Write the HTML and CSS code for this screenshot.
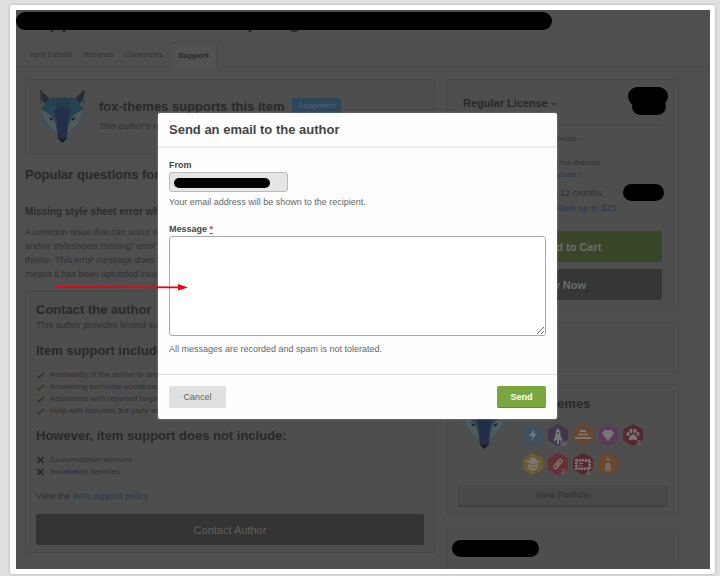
FILE: index.html
```html
<!DOCTYPE html>
<html lang="en">
<head>
<meta charset="utf-8">
<title>Send an email to the author</title>
<link rel="stylesheet" href="styles.css">
</head>
<body>
<svg class="defs" aria-hidden="true">
  <symbol id="fox" viewBox="0 0 156 162">
    <path fill="#2a2d35" d="M12 1 40 28 24 50 14 44ZM146 1 118 28 134 50 144 44Z"/>
    <path fill="#465459" d="M12 1 17 34 27 44 18 60ZM146 1 141 34 131 44 140 60Z"/>
    <path fill="#405258" d="M2 80 20 64 62 92 68 142Z"/>
    <path fill="#405258" d="M156 80 138 64 96 92 90 142Z"/>
    <path fill="#505a5d" d="M20 62 60 86 67 136C44 118 20 92 20 62ZM138 62 98 86 91 136C114 118 138 92 138 62Z"/>
    <path fill="#264350" d="M43 26H115L142 58 128 70C104 82 98 96 93 146L79 160 65 146C60 96 54 82 30 70L16 58Z"/>
    <path fill="#223c4e" d="M62 26H96L104 66 79 96 54 66Z"/>
    <path fill="#242e48" d="M54 66 79 54 104 66C94 88 94 110 92 146L79 156 66 146C64 110 64 88 54 66Z"/>
    <path fill="#1b1d22" d="M64 144 79 151 94 144 88 154 79 162 70 154ZM40 84 51 90 49 95 41 90ZM118 84 107 90 109 95 117 90Z"/>
  </symbol>
  <symbol id="hex" viewBox="0 0 20 22"><path d="M9 .4Q10 0 11 .4L19 5Q20 5.600 20 6.500V15.500Q20 16.400 19 17L11 21.600Q10 22 9 21.600L1 17Q0 16.400 0 15.500V6.500Q0 5.600 1 5Z"/></symbol>
  <symbol id="tick" viewBox="0 0 9 8"><path d="M1 4.500 3.200 6.600 8 1.500" fill="none" stroke="#2d4319" stroke-width="1.800"/></symbol>
  <symbol id="cross" viewBox="0 0 9 8"><path d="M1.500 1 7.500 7M7.500 1 1.500 7" fill="none" stroke="#262626" stroke-width="1.600"/></symbol>
</svg>

<div class="frame">
  <div class="screen">
    <header class="top">
      <h1 class="title"><span>pp</span> <span class="title-p">p</span> <span class="title-g">g</span></h1>
      <nav class="tabs">
        <a href="#">Item Details</a>
        <a href="#">Reviews</a>
        <a href="#">Comments</a>
        <a href="#" class="active">Support</a>
      </nav>
    </header>

    <div class="columns">
      <main class="main">
        <section class="card supported">
          <svg class="fox"><use href="#fox"/></svg>
          <div>
            <h2>fox-themes supports this item <span class="badge">Supported</span></h2>
            <p>This author's res</p>
          </div>
        </section>
        <h2 class="popular">Popular questions for</h2>
        <h3>Missing style sheet error wh</h3>
        <p class="answer">A common issue that can occur w<br>and/or stylesheets missing” error<br>theme. This error message does<br>means it has been uploaded inco</p>

        <section class="card contact">
          <h2>Contact the author</h2>
          <p>This author provides limited su</p>
          <h2 class="list-title">Item support include</h2>
          <ul>
            <li><svg><use href="#tick"/></svg>Availability of the author to ans</li>
            <li><svg><use href="#tick"/></svg>Answering technical questions</li>
            <li><svg><use href="#tick"/></svg>Assistance with reported bugs</li>
            <li><svg><use href="#tick"/></svg>Help with included 3rd party as</li>
          </ul>
          <h2 class="list-title">However, item support does not include:</h2>
          <ul>
            <li><svg><use href="#cross"/></svg>Customization services</li>
            <li><svg><use href="#cross"/></svg>Installation services</li>
          </ul>
          <p class="policy">View the <a href="#">item support policy</a></p>
          <button type="button" class="big">Contact Author</button>
        </section>
      </main>

      <aside class="side">
        <section class="card license">
          <h3>Regular License <i class="caret"></i></h3>
          <ul>
            <li>Quality checked by Envato</li>
            <li>Future updates</li>
            <li>6 month support from fox-themes</li>
            <li><a href="#">What does support include?</a></li>
          </ul>
          <p>Extend support to 12 months<br><a href="#">Get this now and save up to $23</a></p>
          <button type="button" class="big cart"><svg viewBox="0 0 14 12"><path d="M0 1H3L5 8H12L13.500 3H4" fill="none" stroke="#6d6d6d" stroke-width="1.500"/><circle cx="6" cy="10.500" r="1.200" fill="#6d6d6d"/><circle cx="11" cy="10.500" r="1.200" fill="#6d6d6d"/></svg>Add to Cart</button>
          <button type="button" class="big buy">Buy Now</button>
        </section>
        <section class="card blank"></section>
        <section class="card author">
          <div class="author-row">
            <svg class="fox"><use href="#fox"/></svg>
            <div>
              <h2>fox-themes</h2>
              <div class="badges">
                <svg viewBox="0 0 20 22"><use href="#hex" fill="#3d5261"/><path fill="#777" d="M11.500 5 6 12H9.500L8 17 14 9.500H10.500Z"/></svg>
                <svg viewBox="0 0 20 22"><use href="#hex" fill="#42364f"/><path fill="#777" d="M10 4Q13 7 12.500 12L14 14V18L12 16H11V20H9V16H8L6 18V14L7.500 12Q7 7 10 4Z"/><circle cx="10" cy="9" r="1" fill="#42364f"/><text x="12" y="22">W</text></svg>
                <svg viewBox="0 0 20 22"><use href="#hex" fill="#67462f"/><path fill="#777" d="M7 6H13V8H7ZM5 9.500H15V11.500H5ZM2 13H18V15H2Z"/></svg>
                <svg viewBox="0 0 20 22"><use href="#hex" fill="#5d3a5d"/><path fill="#777" d="M6.500 6H13.500L16 9.500 10 17 4 9.500Z"/></svg>
                <svg viewBox="0 0 20 22"><use href="#hex" fill="#55292f"/><g fill="#777"><ellipse cx="5" cy="10" rx="1.500" ry="2"/><ellipse cx="8" cy="7" rx="1.600" ry="2.200"/><ellipse cx="12" cy="7" rx="1.600" ry="2.200"/><ellipse cx="15" cy="10" rx="1.500" ry="2"/><path d="M10 10Q13 11 14.500 15Q14 17 10 15.500Q6 17 5.500 15Q7 11 10 10Z"/></g><text x="14" y="21">8</text></svg>
                <svg viewBox="0 0 20 22"><use href="#hex" fill="#6b5c2e"/><path fill="#777" d="M2 7Q6 9 6.500 7 7 3.500 10 4.500 13 3.500 13.500 7 14 9 18 7 16 11 10 11 4 11 2 7ZM4.500 11Q10 13 15.500 11L14 16 10 18 6 16Z"/><path d="M7 14Q10 16 13 14" stroke="#6b5c2e" fill="none"/></svg>
                <svg viewBox="0 0 20 22"><use href="#hex" fill="#682f33"/><g fill="none" stroke="#777" stroke-width="1.500"><path d="M9 9 11 7Q13 5.500 14 7.500 14.500 9 13 10L11 12Q9.500 13 8.500 11.500"/><path d="M11 12 9 15Q7 16.500 6 14.500 5.500 13 7 12L9 10Q10.500 9 11.500 10.500"/></g><text x="13" y="21">2</text></svg>
                <svg viewBox="0 0 20 22"><use href="#hex" fill="#55292f"/><path d="M3 7H17V16H3Z" fill="none" stroke="#777" stroke-width="2.200" stroke-dasharray="2 1"/><path d="M4 8H16V15H4Z" fill="none" stroke="#777"/><path d="M6 10.500H10M6 12.500H9" stroke="#777"/><text x="13" y="22">4</text></svg>
                <svg viewBox="0 0 20 22"><use href="#hex" fill="#6a472e"/><path d="M10 4 12 7.500H8Z" fill="#777"/><text class="eight" x="7" y="18">8</text></svg>
              </div>
            </div>
          </div>
          <button type="button" class="portfolio">View Portfolio</button>
        </section>
        <section class="card last"></section>
      </aside>
    </div>

    <i class="ink ink-title"></i>
    <i class="ink ink-price"></i>
    <i class="ink ink-price-low"></i>
    <i class="ink ink-extend"></i>
    <i class="ink ink-last"></i>

    <form class="modal" role="dialog" aria-labelledby="modal-title">
      <h2 id="modal-title">Send an email to the author</h2>
      <div class="modal-body">
        <label for="from">From</label>
        <div class="from">
          <input id="from" type="email" disabled>
          <i class="ink ink-from"></i>
        </div>
        <p>Your email address will be shown to the recipient.</p>
        <label for="message" class="message-label">Message <abbr title="required">*</abbr></label>
        <textarea id="message"></textarea>
        <p>All messages are recorded and spam is not tolerated.</p>
      </div>
      <footer>
        <button type="button" class="cancel">Cancel</button>
        <button type="submit" class="send">Send</button>
      </footer>
    </form>

    <svg class="arrow" viewBox="0 0 134 8" aria-hidden="true"><path d="M0 3 124 3.500V5.200L0 4.800Z" fill="#f00010"/><path d="M123 1 133 4.500 123 7.500Z" fill="#f00010"/></svg>
  </div>
</div>
</body>
</html>
```

FILE: styles.css
```css
* { box-sizing: border-box; }

body {
  margin: 0;
  padding: 5px 5px 2px 10px;
  min-height: 100vh;
  display: flex;
  background: repeating-conic-gradient(#e2e2e2 0 25%, #dedede 0 50%) 0 0 / 4px 4px;
  font-family: "Liberation Sans", Arial, sans-serif;
  font-size: 9px;
  line-height: 14px;
  color: #303030;
}

h1, h2, h3, p, ul { margin: 0; padding: 0; }
ul { list-style: none; }
a { color: #2b3a48; text-decoration: none; }
button, input, textarea { font: inherit; margin: 0; }
h2 { font-size: 13px; line-height: 16px; color: #292929; }
.defs { position: absolute; width: 0; height: 0; }

.frame {
  flex: 1;
  padding: 5px 5px 5px 6px;
  background: #fff;
  border-radius: 2px;
  box-shadow: 0 0 3px #aaa;
  display: flex;
}

.screen {
  position: relative;
  flex: 1;
  min-width: 0;
  overflow: hidden;
  background: #4f4f4f;
  display: flex;
  flex-direction: column;
}

/* Header and tabs */
.top { border-bottom: 1px solid #494949; }
.title {
  height: 33px;
  padding: 1px 0 0 33px;
  font-size: 20px;
  line-height: 20px;
  color: #292929;
}
.title-p { margin-left: 168px; }
.title-g { margin-left: 24px; }
.tabs {
  display: flex;
  align-items: flex-end;
  gap: 11px;
  padding-left: 14px;
  font-size: 8px;
  line-height: 24px;
}
.tabs a { color: #333; }
.tabs .active {
  margin: 0 0 -1px -4px;
  padding: 0 7px;
  border: 1px solid #494949;
  border-bottom: 0;
  background: #525252;
  font-weight: bold;
  color: #292929;
}

.columns {
  flex: 1;
  display: flex;
  gap: 12px;
  padding: 11px 31px 0 9px;
}
.main { flex: 1; min-width: 0; padding-bottom: 15px; }
.side { flex: 0 0 232px; display: flex; flex-direction: column; }

.card {
  border: 1px solid #484848;
  border-radius: 2px;
  background: #4e4e4e;
}

.supported {
  display: flex;
  gap: 11px;
  height: 75px;
  padding: 9px 10px;
  white-space: nowrap;
}
.supported h2 { margin-top: 9px; line-height: 18px; }
.supported p { margin-top: 3px; }
.fox { flex: none; width: 52px; height: 54px; }
.badge {
  display: inline-block;
  margin-left: 4px;
  padding: 0 6px;
  border-radius: 2px;
  background: #2c475b;
  color: #606060;
  font-size: 8px;
  line-height: 16px;
  font-weight: normal;
  vertical-align: top;
}

.popular { margin-top: 13px; }
.main h3 { margin-top: 21px; font-size: 10px; line-height: 16px; color: #2c2c2c; }
.answer { margin-top: 5px; }

.contact { margin-top: 10px; padding: 10px 10px 7px; }
.contact .list-title { margin: 11px 0 10px; }
.contact li {
  display: flex;
  align-items: center;
  gap: 5px;
  font-size: 8px;
  line-height: 12px;
}
.contact li svg { width: 9px; height: 8px; }
.policy { margin: 11px 0; }

.big {
  display: flex;
  align-items: center;
  justify-content: center;
  width: 100%;
  height: 31px;
  border: 0;
  border-radius: 2px;
  background: #343434;
  color: #5e5e5e;
  font-size: 11px;
}

/* Sidebar */
.license { height: 232px; padding: 15px 16px 0 15px; }
.license h3 {
  padding-bottom: 13px;
  border-bottom: 1px solid #484848;
  font-size: 11px;
  line-height: 16px;
  color: #292929;
}
.caret {
  display: inline-block;
  border: 3px solid transparent;
  border-top-color: #363636;
  border-bottom: 0;
  vertical-align: middle;
}
.license ul { padding: 8px 0 0 19px; font-size: 8px; line-height: 12px; }
.license p { padding: 5px 0 0 24px; line-height: 15px; white-space: nowrap; }
.license .big { font-weight: bold; color: #6d6d6d; }
.cart svg { width: 14px; height: 12px; margin-right: 4px; }
.license .cart { margin-top: 15px; background: #394627; }
.license .buy { margin-top: 7px; background: #363636; }

.blank { height: 50px; margin-top: 11px; }
.author { margin-top: 12px; padding: 10px 10px 7px; }
.author-row { display: flex; gap: 11px; height: 90px; }
.author h2 { padding-top: 1px; }
.badges {
  display: grid;
  grid-template-columns: repeat(5, 20px);
  gap: 7px 5px;
  margin: 12px 0 0 2px;
}
.badges svg { width: 20px; height: 22px; overflow: visible; }
.badges text { font-size: 7px; fill: #777; }
.badges .eight { font-size: 11px; font-weight: bold; }
.portfolio {
  width: 100%;
  height: 22px;
  border: 0;
  border-bottom: 2px solid #3f3f3f;
  border-radius: 2px;
  background: #494949;
  color: #303030;
}
.last { flex: 1; margin-top: 14px; border-bottom: 0; }

/* Blacked-out details */
.ink { position: absolute; background: #000; border-radius: 10px; }
.ink-title { left: 0; top: 2px; width: 536px; height: 18px; }
.ink-price { left: 612px; top: 77px; width: 40px; height: 19px; }
.ink-price-low { left: 616px; top: 88px; width: 34px; height: 17px; }
.ink-extend { left: 607px; top: 174px; width: 41px; height: 17px; }
.ink-last { left: 436px; top: 530px; width: 87px; height: 17px; }
.ink-from { left: 5px; top: 6px; width: 96px; height: 10px; }

/* Dialog */
.modal {
  position: absolute;
  left: 142px;
  right: 153px;
  top: 103px;
  background: #fefefe;
  border-radius: 2px;
  box-shadow: 0 0 2px #999;
  color: #666;
}
.modal h2 {
  padding: 9px 11px 8px;
  border-bottom: 2px solid #eee;
  color: #444;
}
.modal-body { padding: 10px 11px 18px; }
.modal label { display: block; line-height: 14px; font-weight: bold; color: #444; }
.from { position: relative; width: 119px; }
.from input {
  display: block;
  width: 100%;
  height: 20px;
  padding: 0 5px;
  border: 1px solid #bbb;
  border-radius: 3px;
  background: #e6e6e6;
}
.modal-body p { margin-top: 3px; }
.modal .message-label { margin-top: 13px; }
.modal abbr { color: #e03040; text-decoration: underline; }
.modal textarea {
  display: block;
  width: 100%;
  height: 100px;
  padding: 4px;
  border: 1px solid #aaa;
  border-radius: 3px;
  background: #fff;
  resize: vertical;
}
.modal textarea + p { margin-top: 6px; }
.modal footer {
  display: flex;
  justify-content: space-between;
  padding: 11px;
  border-top: 1px solid #ddd;
}
.modal footer button { height: 22px; border: 0; border-radius: 2px; }
.cancel { width: 57px; background: #dfe1e0; color: #666; }
.modal .send {
  width: 49px;
  background: #7aa63f;
  border-bottom: 1px solid #648b32;
  color: #fff;
  font-weight: bold;
}

.arrow { position: absolute; left: 39px; top: 273px; width: 134px; height: 8px; }
```
